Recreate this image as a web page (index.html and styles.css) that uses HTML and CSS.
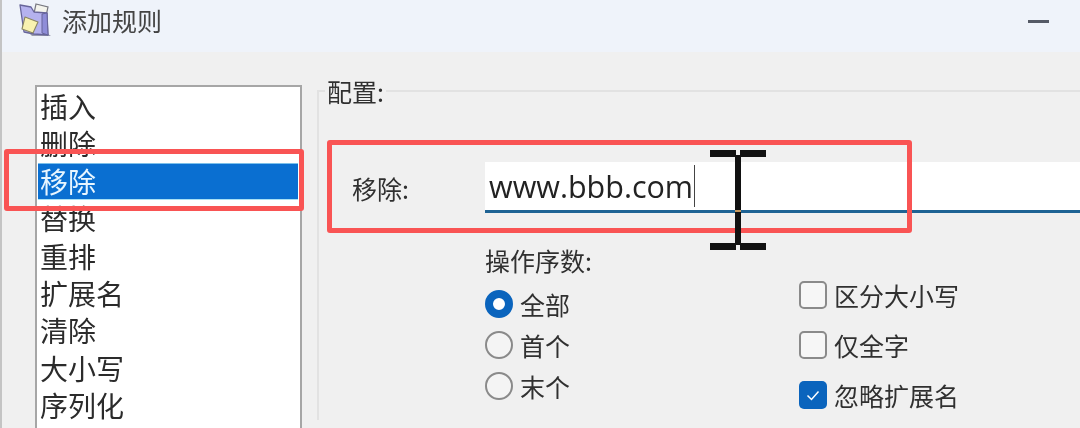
FILE: index.html
```html
<!DOCTYPE html>
<html lang="zh-CN">
<head>
<meta charset="utf-8">
<title>添加规则</title>
<link rel="stylesheet" href="styles.css">
</head>
<body>
<div class="window">
  <header class="titlebar">
    <svg class="app-icon" viewBox="0 0 34 36" aria-hidden="true">
      <path d="M30 33l3 2H14l-3-3z" fill="#77778a" opacity=".7"/>
      <path d="M18 3l12 3-3 14-12-3z" fill="#f4f4ec" stroke="#77777f" stroke-width="1.2"/>
      <path d="M2 4l11 2 3 5 13 1 1 22-14-1L6 31z" fill="#b5b2ee" stroke="#67659a" stroke-width="1.3" stroke-linejoin="round"/>
      <path d="M24 13l5-1 1 22-6-2z" fill="#8f8dd8" stroke="#67659a" stroke-width="1"/>
      <path d="M7 16l13 5-5 11-11-4z" fill="#f9f2b0" stroke="#8a8660" stroke-width="1.1" stroke-linejoin="round"/>
    </svg>
    <span class="title">添加规则</span>
    <span class="minimize"></span>
  </header>
  <main class="content">
    <ul class="rule-list">
      <li>插入</li>
      <li>删除</li>
      <li class="selected">移除</li>
      <li>替换</li>
      <li>重排</li>
      <li>扩展名</li>
      <li>清除</li>
      <li>大小写</li>
      <li>序列化</li>
    </ul>
    <fieldset class="config">
      <legend>配置:</legend>
      <div class="remove-row">
        <label class="remove-label">移除:</label>
        <div class="text-input">www.bbb.com<span class="caret"></span></div>
      </div>
      <div class="options">
        <div class="radio-col">
          <div class="heading">操作序数:</div>
          <div class="opt radio-opt"><span class="radio on"></span>全部</div>
          <div class="opt radio-opt"><span class="radio"></span>首个</div>
          <div class="opt radio-opt"><span class="radio"></span>末个</div>
        </div>
        <div class="check-col">
          <div class="opt check-opt"><span class="check"></span>区分大小写</div>
          <div class="opt check-opt"><span class="check"></span>仅全字</div>
          <div class="opt check-opt"><span class="check on"><svg viewBox="0 0 28 28" aria-hidden="true"><path d="M8.500 14.500l4 4 7-8" fill="none" stroke="#fff" stroke-width="1.500"/></svg></span>忽略扩展名</div>
        </div>
      </div>
    </fieldset>
  </main>
  <div class="mark mark-list"></div>
  <div class="mark mark-input"></div>
  <svg class="ibeam" viewBox="0 0 56 100" aria-hidden="true">
    <path d="M0 0h26v7H0zM30 0h26v7H30zM0 93h26v7H0zM30 93h26v7H30z" fill="#111"/>
    <path d="M25 5h6v90h-6z" fill="#111"/>
    <path d="M25 60h6v2h-6z" fill="#c89a60"/>
  </svg>
</div>
</body>
</html>
```
FILE: styles.css
```css
* { box-sizing: border-box; }
html, body { margin: 0; padding: 0; height: 100%; overflow: hidden; }
body {
  font-family: "Noto Sans CJK SC", "Noto Sans", sans-serif;
  font-size: 25px;
  color: #303030;
  background: #f0f0f0;
}
.window {
  position: relative;
  width: 1080px;
  height: 428px;
  overflow: hidden;
  border-left: 2px solid #c4c4c4;
  background: #f0f0f0;
  filter: blur(0.45px);
}
.titlebar {
  display: flex;
  align-items: center;
  height: 52px;
  background: #eff3fa;
  padding-left: 16px;
}
.app-icon { width: 34px; height: 36px; margin-top: -14px; flex: none; }
.title { margin-left: 10px; margin-top: -12px; color: #444; line-height: 36px; }
.minimize {
  width: 21px;
  height: 3px;
  margin-left: auto;
  margin-right: 31px;
  margin-top: -10px;
  background: #555a66;
}
.content { display: flex; align-items: flex-start; padding-left: 33px; }
.rule-list {
  flex: none;
  width: 267px;
  height: 400px;
  margin: 33px 0 0;
  padding: 1px 0 0;
  list-style: none;
  background: #fff;
  border: 2px solid #a6a6a6;
  font-size: 28px;
  color: #2b2b2b;
}
.rule-list li { height: 37.4px; line-height: 36px; padding-left: 3px; }
.rule-list .selected {
  margin: 0 2px 0 1px;
  padding-left: 2px;
  background: #0a6fd1;
  border-top: 1px solid #7cc0ea;
  border-bottom: 1px solid #a8e0f4;
  line-height: 34px;
  color: #e8f6ff;
}
.config {
  flex: 1;
  min-width: 0;
  margin: 21px 0 0 15px;
  padding: 0;
  border: 0 solid #e2e2e2;
  border-top-width: 2px;
  border-left-width: 2px;
}
.config legend {
  margin-left: 6px;
  padding: 0 2px;
  line-height: 36px;
}
.remove-row { display: flex; align-items: center; margin-top: 53px; padding-left: 33px; }
.remove-label { width: 133px; flex: none; }
.text-input {
  flex: 1;
  display: flex;
  align-items: center;
  height: 51px;
  padding-left: 4px;
  background: #fff;
  border-bottom: 3px solid #1e6394;
  font-family: "Open Sans", "Noto Sans", sans-serif;
  font-size: 30.500px;
  color: #222;
}
.caret { width: 1px; height: 42px; margin-left: 1px; background: #444; }
.options { display: grid; grid-template-columns: 314px 1fr; padding-left: 166px; }
.heading { margin: 29px 0 5px; line-height: 36px; }
.opt { display: flex; align-items: center; }
.radio-opt { height: 41px; gap: 7px; }
.check-col { margin-top: 57px; }
.check-opt { height: 50px; gap: 7px; }
.radio {
  width: 28px;
  height: 28px;
  border: 2px solid #8a8a8a;
  border-radius: 50%;
  background: #f4f4f4;
  flex: none;
}
.radio.on { border: 8px solid #0a64bd; background: #fff; }
.check {
  width: 28px;
  height: 28px;
  border: 2px solid #8a8a8a;
  border-radius: 5px;
  background: #f6f6f6;
  flex: none;
}
.check svg { display: block; width: 100%; height: 100%; }
.check.on { border: 0; background: #0a64bd; }
.mark {
  position: absolute;
  border: 5px solid #f95454;
  border-radius: 3px;
}
.mark-list { left: 2px; top: 149px; width: 300px; height: 62px; }
.mark-input { left: 325px; top: 140px; width: 585px; height: 93px; }
.ibeam { position: absolute; left: 708px; top: 150px; width: 56px; height: 100px; }
```
